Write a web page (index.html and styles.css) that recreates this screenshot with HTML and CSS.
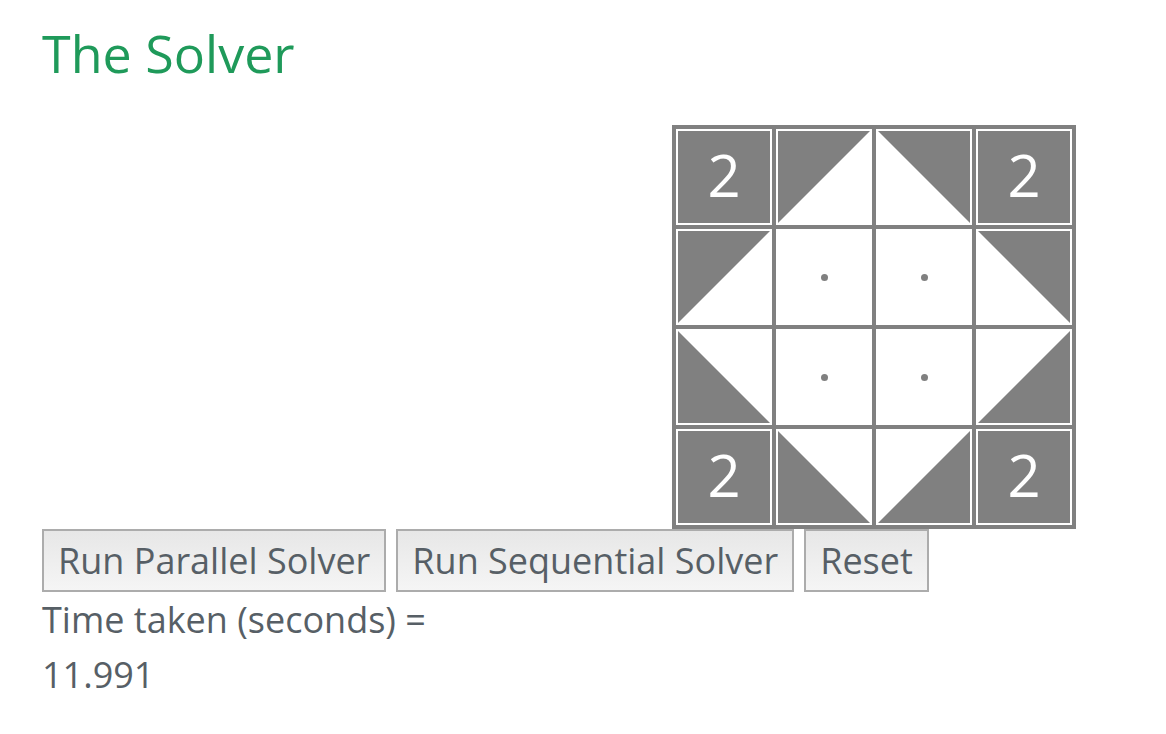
FILE: index.html
```html
<!DOCTYPE html>
<html>
<head>
<meta charset="utf-8">
<title>The Solver</title>
<link rel="stylesheet" href="styles.css">
</head>
<body>
<main class="page">
  <h1 class="title">The Solver</h1>
  <div class="board-row">
    <div class="board">
      <div class="cell num">2</div>
      <div class="cell tri tl"></div>
      <div class="cell tri tr"></div>
      <div class="cell num">2</div>

      <div class="cell tri tl"></div>
      <div class="cell dot"></div>
      <div class="cell dot"></div>
      <div class="cell tri tr"></div>

      <div class="cell tri bl"></div>
      <div class="cell dot"></div>
      <div class="cell dot"></div>
      <div class="cell tri br"></div>

      <div class="cell num">2</div>
      <div class="cell tri bl"></div>
      <div class="cell tri br"></div>
      <div class="cell num">2</div>
    </div>
  </div>
  <div class="controls">
    <button class="btn">Run Parallel Solver</button>
    <button class="btn">Run Sequential Solver</button>
    <button class="btn">Reset</button>
  </div>
  <div class="time-label">Time taken (seconds) =</div>
  <div class="time-value">11.991</div>
</main>
</body>
</html>
```

FILE: styles.css
```css
html, body {
  margin: 0;
  padding: 0;
  background: #ffffff;
}

body {
  font-family: "Open Sans", "Noto Sans", sans-serif;
  color: #575f66;
}

.page {
  width: 1034px;
  padding-left: 42px;
  padding-top: 16px;
}

.title {
  margin: 0;
  font-size: 52px;
  line-height: 74px;
  font-weight: 400;
  color: #1f9a5a;
}

.board-row {
  display: flex;
  justify-content: flex-end;
  margin-top: 35px;
}

.board {
  display: grid;
  grid-template-columns: repeat(4, 96px);
  grid-template-rows: repeat(4, 96px);
  gap: 4px;
  padding: 4px;
  background: #808080;
}

.cell {
  position: relative;
  box-sizing: border-box;
  border: 2px solid #ffffff;
  background: #ffffff;
  overflow: hidden;
}

.cell.num {
  background: #808080;
  color: #ffffff;
  font-size: 58px;
  line-height: 1;
  display: flex;
  align-items: center;
  justify-content: center;
  padding-bottom: 4px;
}

.tri::before {
  content: "";
  position: absolute;
  inset: 0;
  background: #808080;
}

.tl::before { clip-path: polygon(0 0, 100% 0, 0 100%); }
.tr::before { clip-path: polygon(0 0, 100% 0, 100% 100%); }
.bl::before { clip-path: polygon(0 0, 100% 100%, 0 100%); }
.br::before { clip-path: polygon(100% 0, 100% 100%, 0 100%); }

.dot::after {
  content: "";
  position: absolute;
  left: 50%;
  top: 50%;
  width: 7px;
  height: 7px;
  margin: -3.5px 0 0 -3.5px;
  border-radius: 50%;
  background: #808080;
}

.controls {
  display: flex;
  gap: 10px;
}

.btn {
  font-family: "Open Sans", "Noto Sans", sans-serif;
  font-size: 36px;
  color: #575f66;
  height: 63px;
  padding: 0 14px;
  border: 2px solid #acacac;
  background: linear-gradient(#e7e7e7, #f5f5f5);
  border-radius: 0;
}

.time-label,
.time-value {
  font-size: 36px;
}

.time-label {
  line-height: 56px;
}

.time-value {
  line-height: 54px;
}
```
